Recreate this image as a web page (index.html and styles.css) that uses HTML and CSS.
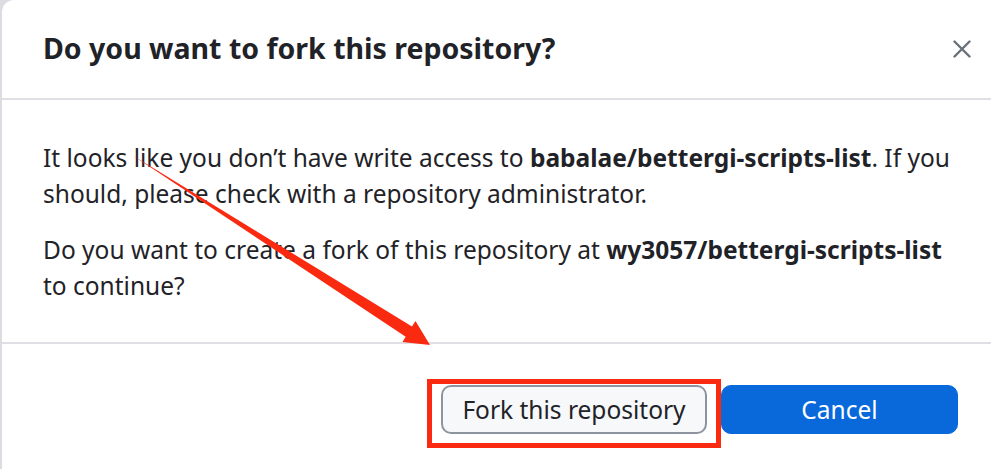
FILE: index.html
```html
<!DOCTYPE html>
<html lang="en">
<head>
<meta charset="utf-8">
<title>Fork this repository</title>
<link rel="stylesheet" href="styles.css">
</head>
<body>
<div class="stage">
  <div class="dialog">
    <header class="dialog-header">
      <h1 class="dialog-title">Do you want to fork this repository?</h1>
      <button class="close-btn" aria-label="Close">
        <svg width="18" height="18" viewBox="0 0 18 18"><path d="M1.5 1.5 L16.5 16.5 M16.5 1.5 L1.5 16.5" stroke="currentColor" stroke-width="2.4" stroke-linecap="round" fill="none"/></svg>
      </button>
    </header>
    <div class="dialog-body">
      <p>It looks like you don’t have write access to <strong>babalae/bettergi-scripts-list</strong>. If you should, please check with a repository administrator.</p>
      <p>Do you want to create a fork of this repository at <strong>wy3057/bettergi-scripts-list</strong> to continue?</p>
    </div>
    <footer class="dialog-footer">
      <button class="btn btn-default">Fork this repository</button>
      <button class="btn btn-primary">Cancel</button>
    </footer>
  </div>
  <svg class="annot-arrow" width="991" height="469" viewBox="0 0 991 469">
    <polygon points="132,155 412,326.5 415.5,321 430,345 402.5,342 405.7,336.7" fill="#fa2a10"/>
  </svg>
  <div class="annot-box"></div>
</div>
</body>
</html>
```

FILE: styles.css
```css
* { box-sizing: border-box; }
html, body { margin: 0; padding: 0; }
body {
  width: 991px;
  height: 469px;
  overflow: hidden;
  background: #dcdce2;
  font-family: "Noto Sans", "Open Sans", sans-serif;
  color: #1f2328;
}
.stage {
  position: relative;
  width: 991px;
  height: 469px;
  padding-left: 2px;
}
.dialog {
  background: #ffffff;
  height: 469px;
  border-top-left-radius: 12px;
  display: flex;
  flex-direction: column;
}
.dialog-header {
  height: 100px;
  display: flex;
  align-items: center;
  justify-content: space-between;
  padding: 0 15px 2px 41px;
  border-bottom: 2px solid #dfe0e5;
}
.dialog-title {
  margin: 0;
  font-size: 28.5px;
  font-weight: 700;
}
.close-btn {
  border: 0;
  background: transparent;
  color: #6a7079;
  width: 28px;
  height: 28px;
  padding: 5px;
  display: flex;
  align-items: center;
  justify-content: center;
  margin-top: 2px;
}
.dialog-body {
  padding: 40px 31px 38px 41px;
  border-bottom: 2px solid #dfe0e5;
}
.dialog-body p {
  margin: 0;
  font-size: 24.5px;
  line-height: 36px;
}
.dialog-body p + p { margin-top: 20px; }
.dialog-body strong { font-weight: 700; }
.dialog-footer {
  display: flex;
  justify-content: flex-end;
  gap: 14px;
  padding: 41px 33px 0 0;
}
.btn {
  height: 49px;
  border-radius: 10px;
  font-family: "Noto Sans", "Open Sans", sans-serif;
  font-size: 24.5px;
  padding: 0;
}
.btn-default {
  width: 266px;
  background: #f6f8fa;
  border: 2px solid #8c959f;
  color: #1f2328;
}
.btn-primary {
  width: 237px;
  background: #0969da;
  border: 1px solid #0969da;
  color: #ffffff;
}
.annot-arrow {
  position: absolute;
  left: 0;
  top: 0;
  pointer-events: none;
}
.annot-box {
  position: absolute;
  left: 427px;
  top: 379px;
  width: 294px;
  height: 69px;
  border: 5px solid #fa2a10;
  pointer-events: none;
}
```
